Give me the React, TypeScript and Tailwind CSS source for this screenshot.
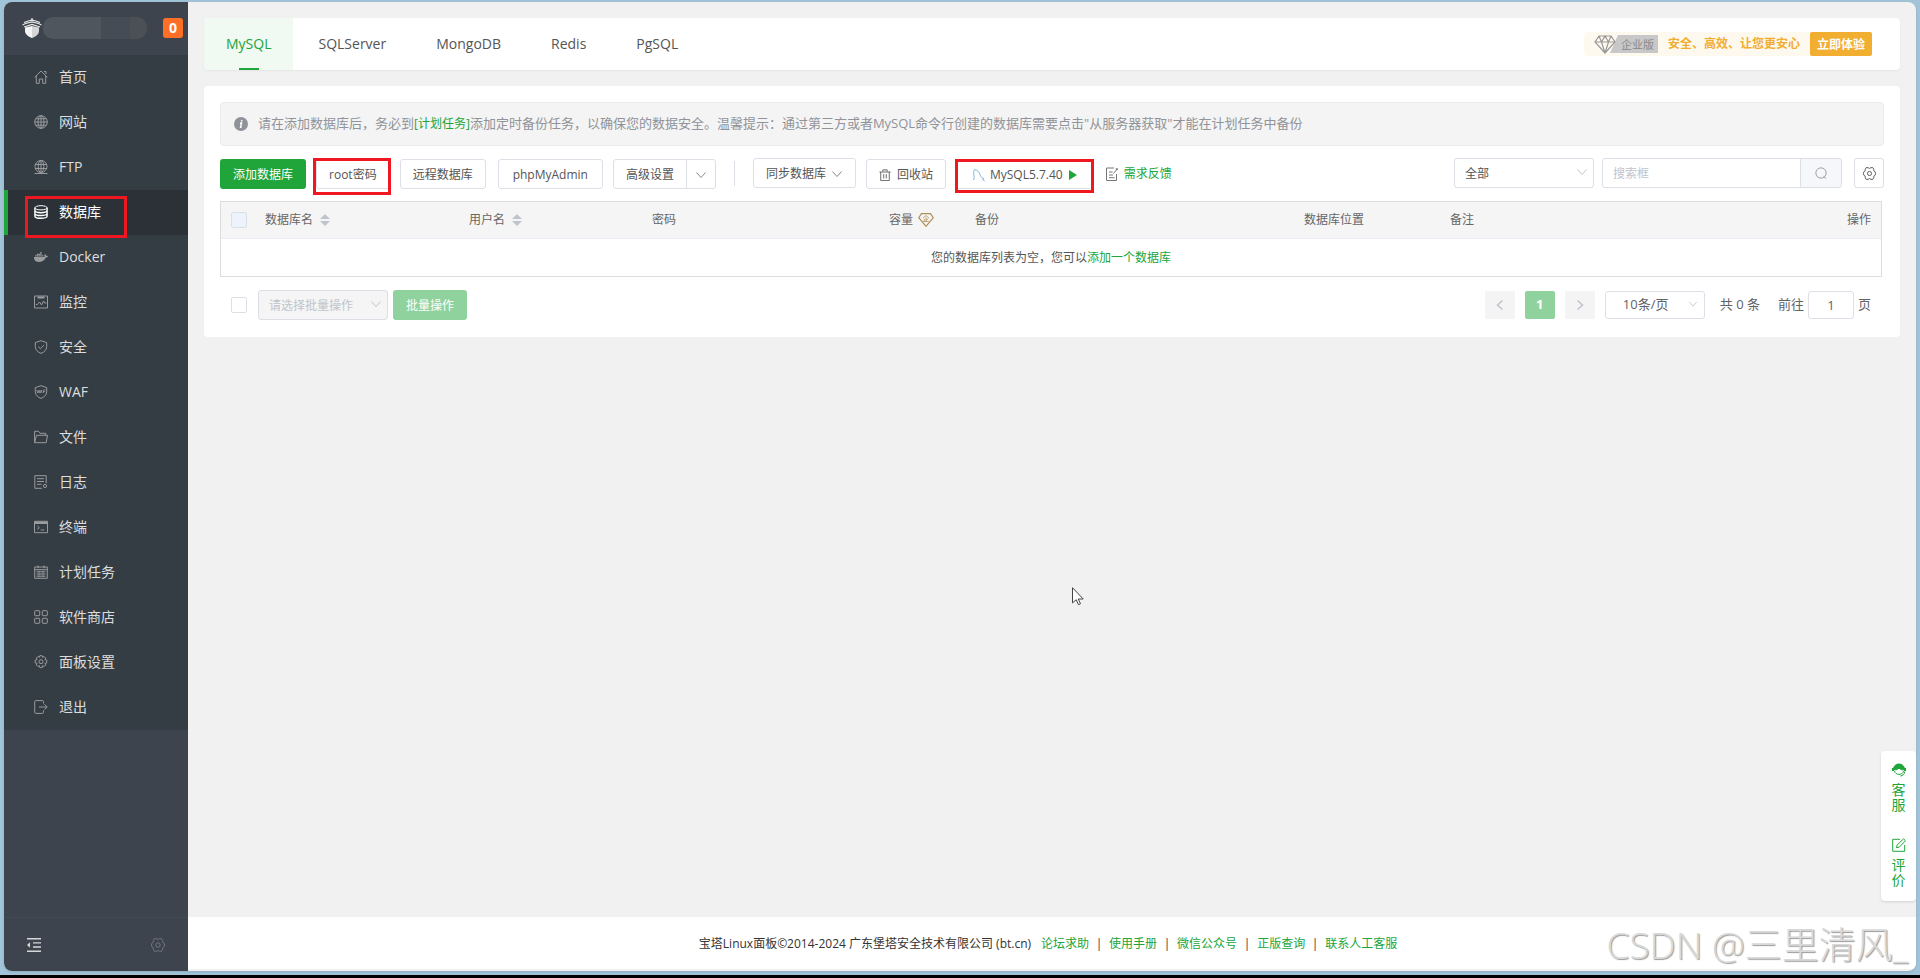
import clsx from 'clsx'
import { useState } from 'react'
import type { ReactNode } from 'react'
import { FaDocker } from 'react-icons/fa'

interface IconProps {
    className?: string
    children?: ReactNode
}

interface MenuItem {
    title: string
    icon: ReactNode
}

function Icon (props: IconProps) {
    const { className = 'size-3.5', children } = props
    return (
        <svg viewBox="0 0 14 14" fill="none" stroke="currentColor" strokeWidth="1" className={clsx('shrink-0', className)} aria-hidden="true">
            {children}
        </svg>
    )
}

function Chevron ({ className }: { className?: string }) {
    return (
        <svg viewBox="0 0 12 12" fill="none" stroke="currentColor" className={clsx('pointer-events-none', className)} aria-hidden="true">
            <path d="M1.5 3.5 6 8.5l4.5-5" />
        </svg>
    )
}

function HexGear ({ className }: { className?: string }) {
    return (
        <Icon className={className}>
            <path d="M3.400.7h2L7 1.500l1.600-.8h2l1 1.700.1 1.800 1.500 1.100.3 1.700-.3 1.700-1.500 1.100-.1 1.800-1 1.700h-2L7 12.500l-1.600.8h-2l-1-1.700-.1-1.800L.8 8.700.5 7l.3-1.700 1.500-1.100.1-1.800z" />
            <circle cx="7" cy="7" r="2.200" />
        </Icon>
    )
}

function Sort () {
    return (
        <svg viewBox="0 0 10 12" className="h-3 w-2.5 text-[#c0c4cc]" fill="currentColor" aria-hidden="true">
            <path d="M0 5 5 0l5 5zM0 7h10l-5 5z" />
        </svg>
    )
}

const menus: MenuItem[] = [
    {
        title: '首页',
        icon: <Icon><path d="M.6 7.300 7 1l6.400 6.300M2.300 6v7.300h3V9h3.400v4.300h3V6M10 1.500h2v2.500" /></Icon>,
    },
    {
        title: '网站',
        icon: <Icon><circle cx="7" cy="7" r="6.300" /><ellipse cx="7" cy="7" rx="3" ry="6.300" /><path d="M7 .7v12.600M.7 7h12.600M1.600 3.800h10.800M1.600 10.200h10.800" /></Icon>,
    },
    {
        title: 'FTP',
        icon: <Icon><circle cx="7" cy="6.500" r="6" /><ellipse cx="7" cy="6.500" rx="2.800" ry="6" /><path d="M7 .5v12M1 4.500h12M1 8.500h12M.5 13.500h13" /></Icon>,
    },
    {
        title: '数据库',
        icon: (
            <Icon>
                <ellipse cx="7" cy="2.800" rx="6.100" ry="2.100" />
                <path d="M.9 2.800v8.400c0 1.200 2.700 2.100 6.100 2.100s6.100-.9 6.100-2.100V2.800M.9 5.600c0 1.200 2.700 2.100 6.100 2.100s6.100-.9 6.100-2.100M.9 8.400c0 1.200 2.700 2.100 6.100 2.100s6.100-.9 6.100-2.100" strokeWidth="1.400" />
            </Icon>
        ),
    },
    { title: 'Docker', icon: <FaDocker className="size-3.5 shrink-0" /> },
    {
        title: '监控',
        icon: <Icon><path d="M.5 1h13v12H.5zM2 9.500h1.500L5.500 7l2 3L9.500 6l1.200 2h1.800" /><path d="M3.500 2.500h7" strokeWidth="2" /></Icon>,
    },
    {
        title: '安全',
        icon: <Icon><path d="M7 .7 12.700 2.600v4.200c0 3-2.200 5.200-5.700 6.600-3.500-1.400-5.700-3.600-5.700-6.600V2.600zM4.200 6.600l2.200 2.100 3.700-3.700" /></Icon>,
    },
    {
        title: 'WAF',
        icon: <Icon><path d="M7 .7 12.700 2.600v4.200c0 3-2.200 5.200-5.700 6.600-3.500-1.400-5.700-3.600-5.700-6.600V2.600z" /><path d="m2.800 5 .8 3 .8-2.500.8 2.500.7-3M6.300 8l.9-3 .9 3M9.400 8V5h2M9.400 6.600h1.700" strokeWidth=".8" /></Icon>,
    },
    {
        title: '文件',
        icon: <Icon><path d="M.6 12.700V1.300h4l1.400 2h5.700v2M.6 12.700l1.900-7.400h11l-1.300 7.400z" /></Icon>,
    },
    {
        title: '日志',
        icon: <Icon><path d="M8 13.300H.8V.7h11.400v7.500M3 3.700h7M3 6.500h7M3 9.300h4.500" /><circle cx="11" cy="11" r="1.600" /></Icon>,
    },
    {
        title: '终端',
        icon: <Icon><path d="M.5 1.300h13v11.400H.5zM3.300 6l2 1.700-2 1.700M6.700 10h3.500" /><path d="M.5 2.800h13" strokeWidth="2.400" /></Icon>,
    },
    {
        title: '计划任务',
        icon: <Icon><path d="M.7 2h12.600v11.300H.7zM.7 4.700h12.600M4 .5v2.700M10 .5v2.700M2.500 6.800h9M2.500 9h9M2.500 11.200h9" /><path d="M5 5.500v7M9 5.500v7" strokeWidth=".6" /></Icon>,
    },
    {
        title: '软件商店',
        icon: <Icon><rect x=".7" y=".7" width="5" height="5" rx=".6" /><rect x="8.300" y=".7" width="5" height="5" rx=".6" /><rect x=".7" y="8.300" width="5" height="5" rx=".6" /><rect x="8.300" y="8.300" width="5" height="5" rx=".6" /></Icon>,
    },
    {
        title: '面板设置',
        icon: (
            <Icon>
                <path d="M5.800.7h2.400l.4 1.600 1.500-.8 1.600 1.600-.8 1.500 1.900.5v2.800l-1.900.5.8 1.500-1.600 1.600-1.500-.8-.4 1.900H5.800l-.4-1.900-1.500.8-1.600-1.600.8-1.500-1.900-.5V5.100l1.900-.5-.8-1.500 1.600-1.600 1.500.8z" />
                <circle cx="7" cy="6.700" r="2" />
            </Icon>
        ),
    },
    {
        title: '退出',
        icon: <Icon><path d="M9.500 3.500V1.600a1 1 0 0 0-1-1H1.700a1 1 0 0 0-1 1v10.800a1 1 0 0 0 1 1h6.800a1 1 0 0 0 1-1v-1.900M5 7h8M10.500 4.300 13.200 7l-2.700 2.700" /></Icon>,
    },
]

const tabs = ['MySQL', 'SQLServer', 'MongoDB', 'Redis', 'PgSQL']
const footerLinks = ['论坛求助', '使用手册', '微信公众号', '正版查询', '联系人工客服']

const btn = 'h-[30px] shrink-0 rounded-[3px] border border-[#dcdfe6] bg-white pt-px text-xs text-[#555]'
const checkbox = 'block size-4 appearance-none rounded-xs border border-[#dcdfe6]'

// red frame drawn over a control
function Frame ({ className }: { className: string }) {
    return <span className={clsx('pointer-events-none absolute border-3 border-[#f01820]', className)} />
}

function Sidebar () {
    const [active, setActive] = useState('数据库')
    return (
        <aside className="flex w-[184px] shrink-0 flex-col bg-[#3d444d]">
            <div className="flex h-[53px] shrink-0 items-center pt-2 pr-[5px] pb-2.5 pl-[18px]">
                <svg viewBox="0 0 20 20" className="size-5 shrink-0" aria-hidden="true">
                    <path d="M10 0v3M2 4.500l8-2.700 8 2.700M.5 7l3-1.500L10 3.800l6.500 1.700 3 1.500M2 9l8-2.500L18 9" fill="none" stroke="#e8e8e8" strokeWidth="1.200" />
                    <path d="M3 9.500 10 8v12c-4-1.500-7-4-7-7z" fill="#f4f4f4" />
                    <path d="M17 9.500 10 8v12c4-1.500 7-4 7-7z" fill="#d6d6d6" />
                </svg>
                <div className="ml-px flex h-[22px] w-[104px] overflow-hidden rounded-[10px]">
                    <span className="w-[58px] bg-[#50565e]" />
                    <span className="w-[29px] bg-[#454c55]" />
                    <span className="flex-1 bg-[#4a5056]" />
                </div>
                <span className="ml-auto flex size-5 items-center justify-center rounded-[3px] bg-[#ff6e26] text-sm font-bold text-white">0</span>
            </div>
            <nav className="bg-[#353d44]">
                {menus.map(item => {
                    const isActive = item.title === active
                    return (
                        <button
                            key={item.title}
                            onClick={() => setActive(item.title)}
                            className={clsx(
                                'relative flex h-[45px] w-full items-center gap-[11px] border-l-4 pb-0.5 pl-[26px] text-sm',
                                isActive ? 'border-[#20a53a] bg-[#2c3138] text-white' : 'border-transparent text-[#999b9d]',
                            )}>
                            {item.icon}
                            <span className={isActive ? 'text-white' : 'text-[#dcddde]'}>{item.title}</span>
                            {item.title === '数据库' && <Frame className="top-[6px] left-[17px] h-[42px] w-[102px]" />}
                        </button>
                    )
                })}
            </nav>
            <div className="mt-auto flex h-[54px] items-center justify-between border-t border-[#414c52] px-[23px]">
                <button aria-label="收起菜单" className="text-[#d5d7d9]">
                    <Icon>
                        <path d="M0 .8h14M6 4.900h8M6 9h8M0 13.200h14" strokeWidth="1.400" />
                        <path d="M3 4.300v5.400L0 7z" fill="currentColor" stroke="none" />
                    </Icon>
                </button>
                <button aria-label="设置" className="text-[#71767b]"><HexGear /></button>
            </div>
        </aside>
    )
}

function TabBar () {
    const [active, setActive] = useState('MySQL')
    return (
        <div className="flex h-[52px] items-center overflow-hidden rounded bg-white pr-7 shadow-xs">
            {tabs.map(tab => (
                <button
                    key={tab}
                    onClick={() => setActive(tab)}
                    className={clsx(
                        'relative h-full text-sm',
                        tab === 'MySQL' ? 'px-[22px]' : 'px-[25px]',
                        tab === active ? 'bg-[#f0f9f2] text-[#20a53a]' : 'text-[#555]',
                    )}>
                    {tab}
                    {tab === active && <span className="absolute bottom-0 left-1/2 h-0.5 w-5 -translate-x-1/2 bg-[#20a53a]" />}
                </button>
            ))}
            <div className="ml-auto flex items-center rounded bg-[#fef9ee] pl-2.5 text-xs font-bold text-[#f2ae31]">
                <svg viewBox="0 0 22 19" className="z-10 h-[19px] w-[22px]" fill="none" stroke="#999" strokeWidth="1.200" aria-hidden="true">
                    <path d="M5 1h12l4 6-10 11L1 7zM1 7h20M5 1l2.500 6L11 18l3.500-11L17 1M7.500 7 11 1l3.500 6" />
                </svg>
                <span className="-ml-1.5 h-[18px] bg-[#c8c8c8] pr-1 pl-[11px] text-[11px] leading-[19px] font-normal text-[#888] [clip-path:polygon(8px_0,100%_0,100%_100%,0_100%)]">企业版</span>
                <span className="ml-2.5 h-[22px] leading-[22px]">安全、高效、让您更安心</span>
                <button className="ml-2.5 h-6 rounded-xs bg-[#f2ae31] px-[7px] pt-px text-white">立即体验</button>
            </div>
        </div>
    )
}

function Toolbar () {
    return (
        <div className="mt-3 flex h-[31px] items-start">
            <div className="flex gap-2.5 self-end">
                <button className="h-[30px] rounded-[3px] bg-[#20a53a] px-[13px] pt-px text-xs text-white">添加数据库</button>
                <div className="relative">
                    <button className={clsx(btn, 'px-3')}>root密码</button>
                    <Frame className="-top-px -left-[3px] h-[37px] w-[78px]" />
                </div>
                <button className={clsx(btn, 'px-3')}>远程数据库</button>
                <button className={clsx(btn, 'ml-0.5 px-3.5')}>phpMyAdmin</button>
                <div className="flex">
                    <button className={clsx(btn, 'rounded-r-none px-3')}>高级设置</button>
                    <button aria-label="更多" className={clsx(btn, '-ml-px flex w-[30px] items-center justify-center rounded-l-none')}><Chevron className="size-3 text-[#888]" /></button>
                </div>
            </div>
            <span className="mt-[3px] ml-[18px] h-[25px] w-px bg-[#dcdfe6]" />
            <button className={clsx(btn, 'ml-[18px] flex items-center gap-[5px] px-3')}>同步数据库<Chevron className="size-3 text-[#888]" /></button>
            <div className="ml-2.5 flex gap-2.5 self-end">
                <button className={clsx(btn, 'flex items-center gap-1.5 px-3')}>
                    <Icon className="size-3"><path d="M.5 3.500h13M4.500 3V1h5v2M2 3.500v10h10v-10M5.500 6v5M8.500 6v5" /></Icon>
                    回收站
                </button>
                <div className="relative">
                    <button className={clsx(btn, 'flex items-center gap-1 px-[15px]')}>
                        <Icon className="size-3.5 text-[#7ab6d9]"><path d="M1.500 12c.5-1.500 1-2 .5-4S1.500 3 2.500 1.500C5 2 7 3.500 8 6.500c.6 1.800 1.200 3 2.500 3.700l1.500.5-1.300.6 2 2" /></Icon>
                        MySQL5.7.40
                        <svg viewBox="0 0 8 10" className="ml-0.5 h-2.5 w-2" fill="#20a53a" aria-hidden="true"><path d="M0 0v10l8-5z" /></svg>
                    </button>
                    <Frame className="-inset-x-px top-0 -bottom-1" />
                </div>
            </div>
            <a href="#feedback" className="mt-2 ml-3 flex items-center gap-[5px] text-xs text-[#20a53a]">
                <Icon className="size-3.5 text-[#777]"><path d="M9 1H1.500v12.500h10V7M4 5h3.500M4 8h4M4 10.700h5.500M8.500 6.500l4-5" /><path d="m11 1.500 1.500 1.300" strokeWidth="1.600" /></Icon>
                需求反馈
            </a>
            <div className="relative ml-auto w-[140px]">
                <select aria-label="数据库位置" className={clsx(btn, 'w-full appearance-none px-2.5')}>
                    <option>全部</option>
                </select>
                <Chevron className="absolute top-2 right-1.5 size-3 text-[#c0c4cc]" />
            </div>
            <div className="ml-2 flex">
                <input aria-label="搜索" placeholder="搜索框" className="h-[30px] w-[199px] rounded-l-[3px] border border-[#dcdfe6] px-2.5 text-xs placeholder:text-[#c0c4cc]" />
                <button aria-label="搜索" className="-ml-px flex h-[30px] w-[42px] items-center justify-center rounded-r-[3px] border border-[#dcdfe6] bg-[#f5f7fa]">
                    <Icon className="size-3 text-[#909399]"><circle cx="7" cy="7" r="6" /><path d="m10 11 3 2.500" /></Icon>
                </button>
            </div>
            <button aria-label="表格设置" className={clsx(btn, 'ml-3 flex w-[30px] items-center justify-center')}><HexGear className="size-[13px]" /></button>
        </div>
    )
}

function DatabaseTable () {
    return (
        <div className="mt-3 mr-0.5 border border-[#dcdddf]">
            <table className="w-full table-fixed text-left text-xs text-[#666]">
                <colgroup>
                    <col className="w-[34px]" />
                    <col className="w-[204px]" />
                    <col className="w-[183px]" />
                    <col className="w-[237px]" />
                    <col className="w-[86px]" />
                    <col className="w-[329px]" />
                    <col className="w-[146px]" />
                    <col />
                    <col className="w-20" />
                </colgroup>
                <thead>
                    <tr className="h-9 border-b border-[#ebeef5] bg-[#f5f5f5] [&>th]:px-2.5 [&>th]:py-0 [&>th]:font-normal">
                        <th><input type="checkbox" disabled aria-label="全选" className={clsx(checkbox, 'bg-[#edf2fc]')} /></th>
                        <th><span className="flex items-center gap-[7px]">数据库名<Sort /></span></th>
                        <th><span className="flex items-center gap-[7px]">用户名<Sort /></span></th>
                        <th>密码</th>
                        <th>
                            <span className="flex items-center gap-[5px]">
                                容量
                                <svg viewBox="0 0 16 14" className="h-3.5 w-4" fill="none" stroke="#b09058" strokeWidth="1.200" aria-hidden="true">
                                    <path d="M3.500.7h9l2.800 4L8 13.300.7 4.700z" />
                                    <path d="M5 5 8 2.500 11 5M8 4.500v4M8 6.300h2M6.300 6v2.500M5.300 8.500h5.400" strokeWidth=".8" />
                                </svg>
                            </span>
                        </th>
                        <th>备份</th>
                        <th>数据库位置</th>
                        <th>备注</th>
                        <th className="text-right">操作</th>
                    </tr>
                </thead>
                <tbody>
                    <tr className="h-[38px]">
                        <td colSpan={9} className="p-0 pt-0.5 text-center text-[#555]">
                            您的数据库列表为空，您可以<a href="#add" className="text-[#20a53a]">添加一个数据库</a>
                        </td>
                    </tr>
                </tbody>
            </table>
        </div>
    )
}

function Pagination () {
    return (
        <div className="ml-auto flex h-7 items-center text-[13px] text-[#606266]">
            <button aria-label="上一页" disabled className="flex h-7 w-[30px] items-center justify-center rounded-xs bg-[#f4f4f5] text-[#c0c4cc]">
                <Chevron className="size-3 rotate-90 stroke-[1.5]" />
            </button>
            <button className="ml-2.5 h-7 w-[30px] rounded-xs bg-[#90d29d] font-bold text-white">1</button>
            <button aria-label="下一页" disabled className="ml-2.5 flex h-7 w-[30px] items-center justify-center rounded-xs bg-[#f4f4f5] text-[#c0c4cc]">
                <Chevron className="size-3 -rotate-90 stroke-[1.5]" />
            </button>
            <div className="relative ml-2.5 w-[100px]">
                <select aria-label="每页条数" className="block h-7 w-full appearance-none rounded-[3px] border border-[#dcdfe6] bg-white pl-[17px]">
                    <option>10条/页</option>
                </select>
                <Chevron className="absolute top-2 right-[7px] size-2.5 text-[#c0c4cc]" />
            </div>
            <span className="ml-[15px]">共 0 条</span>
            <label className="ml-[18px] flex items-center gap-1">
                前往
                <input defaultValue="1" className="h-7 w-[46px] rounded-[3px] border border-[#dcdfe6] text-center" />
                页
            </label>
        </div>
    )
}

function FloatBar () {
    return (
        <div className="absolute right-0 bottom-[70px] flex h-[150px] w-[35px] flex-col items-center rounded bg-white pt-3 text-sm leading-[15px] text-[#20a53a] shadow-sm">
            <button className="flex h-[75px] w-3.5 flex-col items-center gap-[5px]">
                <Icon>
                    <path d="M1.500 6.500C1.500 3 4 1 7 1s5.500 2 5.500 5.500c-2 .8-4 .2-5.500-1.500-1.500 1.700-3.500 2.300-5.500 1.500z" fill="currentColor" />
                    <path d="M1 5v3M13 5v3" strokeWidth="2" />
                    <path d="M2.500 8c.8 4.500 8.200 4.500 9 0M12.800 8.500c-.5 2.800-2 4.300-4.500 4.500" />
                </Icon>
                <span>客服</span>
            </button>
            <button className="flex w-3.5 flex-col items-center gap-[5px]">
                <Icon><path d="M8 1.300H.7v12h12V7M4.500 9.700l.5-2.600L11.500.9l2 1.800-6.300 6.500z" /></Icon>
                <span>评价</span>
            </button>
        </div>
    )
}

export default function App () {
    return (
        <div className="flex min-h-screen flex-col border-b-3 border-black bg-[#a1c4d9] px-1 pt-0.5 pb-1 font-['Open_Sans','Noto_Sans_CJK_SC',sans-serif]">
            <div className="relative flex flex-1 overflow-hidden rounded-lg bg-[#f1f1f1] shadow-sm">
                <Sidebar />
                <div className="flex min-w-0 flex-1 flex-col">
                    <main className="flex flex-col gap-4 p-4">
                        <TabBar />
                        <section className="rounded bg-white px-4 pt-4 pb-[17px]">
                            <div className="flex h-11 items-center rounded border border-[#ebebeb] bg-[#f4f4f4] px-[13px] text-[13px] text-[#909399]">
                                <svg viewBox="0 0 14 14" className="mr-2.5 size-3.5 shrink-0" aria-hidden="true">
                                    <circle cx="7" cy="7" r="7" fill="#909399" />
                                    <path d="M6 6h1.500L6.600 10.300h1M7.700 3v1.500" fill="none" stroke="#fff" strokeWidth="1.500" />
                                </svg>
                                <p>
                                    请在添加数据库后，务必到<a href="#crontab" className="text-xs text-[#20a53a]">[计划任务]</a>添加定时备份任务，以确保您的数据安全。温馨提示：通过第三方或者MySQL命令行创建的数据库需要点击"从服务器获取"才能在计划任务中备份
                                </p>
                            </div>
                            <Toolbar />
                            <DatabaseTable />
                            <div className="mt-[13px] flex items-center pr-[13px] pl-[11px]">
                                <input type="checkbox" aria-label="全选" className={clsx(checkbox, 'bg-white')} />
                                <div className="relative ml-[11px] w-[130px]">
                                    <select disabled aria-label="批量操作" className="block h-[30px] w-full appearance-none rounded-[3px] border border-[#dcdfe6] bg-[#f5f5f5] px-2.5 pt-px text-xs text-[#c0c4cc] opacity-100">
                                        <option>请选择批量操作</option>
                                    </select>
                                    <Chevron className="absolute top-2 right-1.5 size-3 text-[#c0c4cc]" />
                                </div>
                                <button disabled className="ml-[5px] h-[30px] rounded-[3px] bg-[#90d29d] px-[13px] pt-px text-xs text-white">批量操作</button>
                                <Pagination />
                            </div>
                        </section>
                    </main>
                    <footer className="mt-auto mb-0.5 flex h-[52px] items-center justify-center bg-white pt-0.5 pr-2 text-xs text-[#333]">
                        <span className="mr-2.5">宝塔Linux面板©2014-2024 广东堡塔安全技术有限公司 (bt.cn)</span>
                        {footerLinks.map((link, index) => (
                            <span key={link} className="flex">
                                {index > 0 && <span className="w-5 text-center">|</span>}
                                <a href="#help" className="text-[#20a53a]">{link}</a>
                            </span>
                        ))}
                    </footer>
                </div>
                <FloatBar />
                <svg viewBox="0 0 12 19" className="absolute top-[585px] left-[1068px] h-[19px] w-3" fill="#fff" stroke="#444" aria-hidden="true">
                    <path d="M.5.7v15.200l3.700-3.200 2.300 5 2-1-2.300-4.700h5z" />
                </svg>
                <p className="pointer-events-none absolute right-2 bottom-0 text-[37px] leading-[52px] font-light whitespace-nowrap text-[#d9d9d9] [text-shadow:1px_1px_1px_#999]">CSDN @三里清风_</p>
            </div>
        </div>
    )
}
